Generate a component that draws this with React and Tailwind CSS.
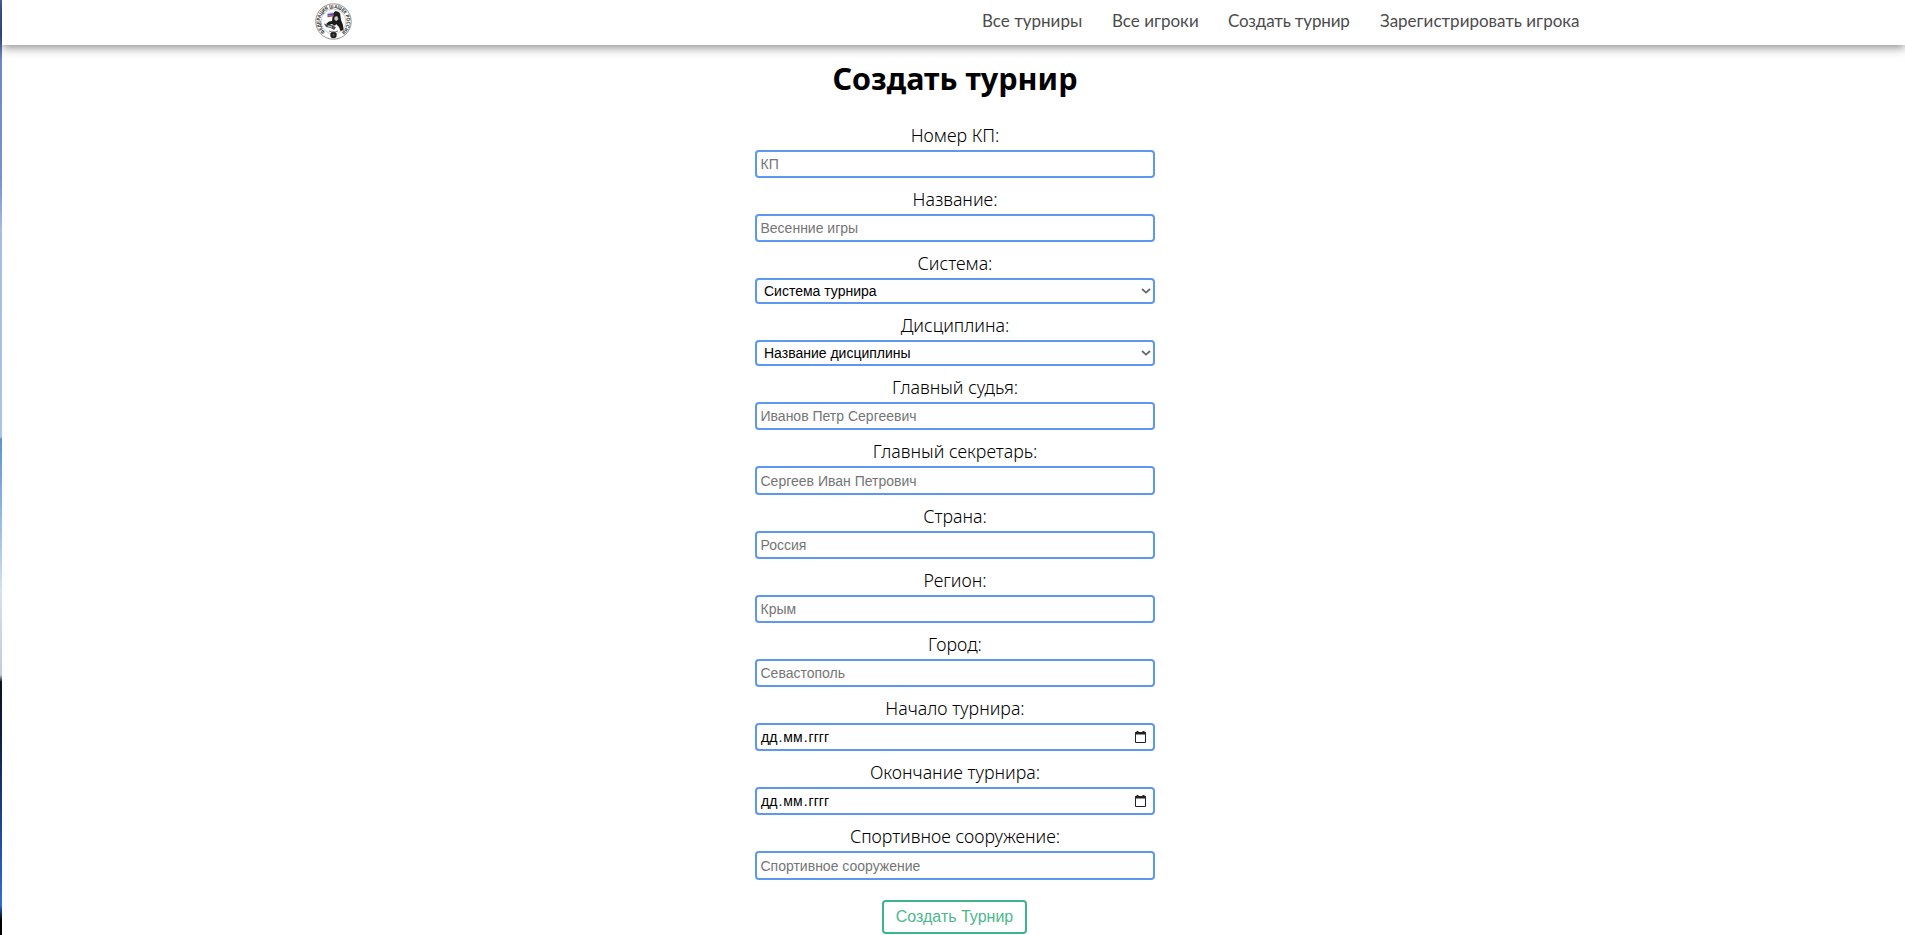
const nav = [
  ['Все турниры', 'w-[100px]'],
  ['Все игроки', 'w-[86px]'],
  ['Создать турнир', 'w-[122px] tracking-[-0.15px]'],
  ['Зарегистрировать игрока', 'w-[200px]'],
];

const fields = [
  { label: 'Номер КП:', text: 'КП' },
  { label: 'Название:', text: 'Весенние игры' },
  { label: 'Система:', text: 'Система турнира', kind: 'select' },
  { label: 'Дисциплина:', text: 'Название дисциплины', kind: 'select' },
  { label: 'Главный судья:', text: 'Иванов Петр Сергеевич' },
  { label: 'Главный секретарь:', text: 'Сергеев Иван Петрович', tall: true },
  { label: 'Страна:', text: 'Россия' },
  { label: 'Регион:', text: 'Крым' },
  { label: 'Город:', text: 'Севастополь' },
  { label: 'Начало турнира:', kind: 'date' },
  { label: 'Окончание турнира:', kind: 'date' },
  { label: 'Спортивное сооружение:', text: 'Спортивное сооружение', tall: true },
];

function Logo() {
  return (
    <svg className="size-[37px]" viewBox="0 0 37 37">
      <defs>
        <path id="ring" d="M10.2 28.8 A13.2 13.2 0 1 1 26.8 28.8" />
      </defs>
      <circle cx="18.5" cy="18.5" r="17.7" fill="#fff" stroke="#777" strokeWidth="0.8" />
      <circle cx="18.5" cy="18.5" r="12.4" fill="#fff" stroke="#999" strokeWidth="0.5" />
      <text fontFamily="Liberation Sans, sans-serif" fontSize="5.2" fontWeight="700" fill="#222">
        <textPath href="#ring" textLength="65" lengthAdjust="spacingAndGlyphs">ФЕДЕРАЦИЯ ШАШЕК РОССИИ</textPath>
      </text>
      <path d="M18 10c2-2.600 6-2 7.200 1l.8 6 2 5 .5 5-3 1-1.500-4-2-2-3 .5-2-1.500-4 1.500-2-1.500 3-2.500 3-.5z" fill="#1b1b1b" />
      <path d="M19.500 14l2.500-1 1.500 3-2 2-2-1z" fill="#c9c9c9" />
      <path d="M9 20.500l4 1.200 5 .5 3 2.300-2 2.500-3-2-5-1z" fill="#555" />
      <path d="M13 23l4 1M21 21l2 4" stroke="#eee" strokeWidth="0.8" />
      <path d="M12.500 9.500l6.500-1v1.500l-6.500 1z" fill="#ddd" />
      <path d="M12.500 11l6.500-1v1.700l-6.500 1z" fill="#3156c8" />
      <path d="M12.500 12.700l6.500-1v1.500l-6.500 1z" fill="#d43b3b" />
      <circle cx="18.500" cy="32" r="3.200" fill="#1c1c1c" />
      <path d="M17 32h3M18.500 30.500v3" stroke="#777" strokeWidth="0.5" />
      <path d="M14 28c3 1.300 6 1.300 9 0" fill="none" stroke="#555" strokeWidth="0.8" />
    </svg>
  );
}

function Field({ label, text, kind, tall }) {
  const height = kind === 'select' ? 'h-[26px]' : tall ? 'h-[29px]' : 'h-7';
  return (
    <div className="flex flex-col items-center">
      <label className="flex h-9 items-center justify-center pt-[5px] font-['Noto_Sans',sans-serif] text-[17.8px] font-light leading-6 text-black">
        {label}
      </label>
      <div className={`flex w-[400px] items-center rounded-[4px] border-2 border-[#5c98ef] bg-white font-['Liberation_Sans',sans-serif] text-sm leading-4 ${height} ${kind === 'select' ? 'pl-[7px] pr-[2px] text-black' : kind === 'date' ? 'pl-[4px] pr-[7px] text-black' : 'pl-[3.5px] text-[#757575]'}`}>
        {kind === 'date' ? (
          <>
            <span>дд</span><span className="w-[6px] text-center">.</span>
            <span>мм</span><span className="w-[6px] text-center">.</span>
            <span>гггг</span>
          </>
        ) : (
          <span>{text}</span>
        )}
        {kind === 'select' && (
          <svg className="ml-auto h-[6px] w-[10px]" viewBox="0 0 10 6" fill="none" stroke="#666" strokeWidth="1.7">
            <path d="M1 1l4 3.6L9 1" />
          </svg>
        )}
        {kind === 'date' && (
          <svg className="ml-auto h-3 w-[11px]" viewBox="0 0 11 12" fill="none" stroke="#222">
            <path d="M.5 1.5h10v10H.5z" /><path d="M0 2.5h11M2.5 0v2M8.5 0v2" strokeWidth="2" />
          </svg>
        )}
      </div>
    </div>
  );
}

export default function App() {
  return (
    <div className="flex h-[935px] overflow-hidden bg-white">
      <div className="w-[2px] shrink-0 bg-[linear-gradient(#4a66ab_0,#3a559c_35px,#6d87c6_60px,#7892cf_180px,#a3bce3_230px,#a9c3e8_437px,#5c93cf_439px,#a5c4e8_540px,#d4e1f1_590px,#c0cbe0_675px,#0a1020_682px,#0c1f48_740px,#2352a6_850px,#2d6fd6_905px,#000_920px)]" />
      <div className="flex min-w-0 grow flex-col">
        <header className="z-10 flex h-[45px] shrink-0 items-center bg-white pb-[3px] pl-[313px] shadow-[0_2px_10px_rgba(0,0,0,0.5)]">
          <Logo />
          <nav className="ml-[630px] flex gap-[30px] font-[Lato,sans-serif] text-[17px] leading-6 text-[#4c4c4c]">
            {nav.map(([name, width]) => (
              <a key={name} className={`whitespace-nowrap ${width}`}>{name}</a>
            ))}
          </nav>
        </header>
        <main className="flex flex-col items-center pl-[3px]">
          <h1 className="flex h-[69px] items-center whitespace-nowrap pb-[2px] font-['Noto_Sans',sans-serif] text-[30.5px] font-bold text-black">Создать турнир</h1>
          {fields.map((field) => <Field key={field.label} {...field} />)}
          <button className="mr-px mt-5 flex h-[34px] w-[145px] items-center justify-center rounded-[4px] border-2 border-[#3eb489] font-['Liberation_Sans',sans-serif] text-base text-[#4cb78d]">
            Создать Турнир
          </button>
        </main>
      </div>
    </div>
  );
}
